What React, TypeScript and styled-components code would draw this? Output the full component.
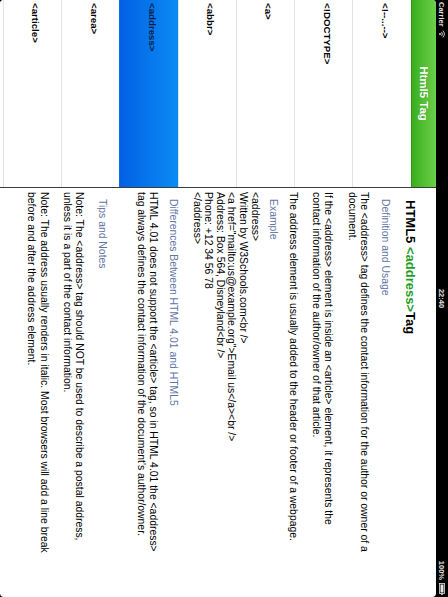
import React from 'react';
import styled, { createGlobalStyle } from 'styled-components';

const GlobalStyle = createGlobalStyle`
  *, *::before, *::after { box-sizing: border-box; }
  html, body { margin: 0; padding: 0; background: #000; }
  body { font-family: "Liberation Sans", Arial, sans-serif; }
  #root { width: 448px; height: 597px; overflow: hidden; }
`;

const Device = styled.div`
  width: 448px;
  height: 597px;
  overflow: hidden;
  background: #000;
`;

// the whole landscape screen is shown turned a quarter clockwise
const Screen = styled.div`
  width: 597px;
  height: 448px;
  display: flex;
  flex-direction: column;
  background: #000;
  transform-origin: 0 0;
  transform: translateX(448px) rotate(90deg);
`;

const StatusBar = styled.div`
  height: 12px;
  flex: none;
  display: grid;
  grid-template-columns: 1fr auto 1fr;
  align-items: center;
  padding: 0 2px;
  color: #e4e4e4;
  font: bold 7.5px "Liberation Sans", Arial, sans-serif;
`;

const StatusGroup = styled.div<{ $end?: boolean }>`
  display: flex;
  align-items: center;
  gap: 3px;
  justify-content: ${(p) => (p.$end ? 'flex-end' : 'flex-start')};
`;

const Split = styled.div`
  flex: 1;
  min-height: 0;
  display: flex;
  border-radius: 4px;
  overflow: hidden;
  background: #fff;
`;

const Master = styled.div`
  width: 188px;
  flex: none;
  display: flex;
  flex-direction: column;
  border-right: 1px solid #3c3c3c;
  overflow: hidden;
`;

const NavBar = styled.div`
  height: 25.3px;
  flex: none;
  display: flex;
  align-items: center;
  justify-content: center;
  background: linear-gradient(#6ccf4a, #3aae1d);
  border-bottom: 1px solid #2f9418;
  color: #fff;
  font: bold 11.5px "Liberation Sans", Arial, sans-serif;
  text-shadow: 0 -1px 0 rgba(0, 0, 0, 0.2);
`;

const Row = styled.div<{ $selected?: boolean }>`
  height: 58.3px;
  flex: none;
  display: flex;
  align-items: center;
  padding: 0 0 7px 3px;
  border-bottom: 1px solid ${(p) => (p.$selected ? '#0a6fe6' : '#e3e3e3')};
  background: ${(p) => (p.$selected ? 'linear-gradient(#0b8cf5, #0260e3)' : '#fff')};
  color: ${(p) => (p.$selected ? '#0c1d45' : '#000')};
  font: bold 9.7px "Liberation Sans", Arial, sans-serif;
`;

const Detail = styled.div`
  flex: 1;
  min-width: 0;
  display: flex;
  flex-direction: column;
  padding: 0 4px;
  overflow: hidden;
  color: #000;
  font: 10.4px "Liberation Sans", Arial, sans-serif;
  line-height: 12.3px;
`;

const Title = styled.h1<{ $top: number }>`
  margin: ${(p) => p.$top}px 0 0;
  padding-left: 8px;
  font: bold 13px "Liberation Sans", Arial, sans-serif;
  line-height: 18px;
`;

const Accent = styled.span`
  color: #1f9e1f;
`;

const Heading = styled.h3<{ $top: number }>`
  margin: ${(p) => p.$top}px 0 0;
  padding-left: 7px;
  color: #5e76a5;
  font: 10.4px "Liberation Sans", Arial, sans-serif;
  line-height: 12px;
`;

const Para = styled.p<{ $top: number; $tight?: boolean }>`
  margin: ${(p) => p.$top}px 0 0;
  white-space: nowrap;
  line-height: ${(p) => (p.$tight ? '11.6px' : '12.3px')};
`;

const Wifi = () => (
  <svg width="8" height="6" viewBox="0 0 8 6">
    <path d="M0.6 2.2 A5 5 0 0 1 7.4 2.2" stroke="#e4e4e4" strokeWidth="0.9" fill="none" />
    <path d="M1.9 3.5 A3.2 3.2 0 0 1 6.1 3.5" stroke="#e4e4e4" strokeWidth="0.9" fill="none" />
    <circle cx="4" cy="5" r="0.9" fill="#e4e4e4" />
  </svg>
);

const Battery = () => (
  <svg width="12" height="6" viewBox="0 0 12 6">
    <rect x="0.5" y="0.5" width="10" height="5" fill="none" stroke="#e4e4e4" strokeWidth="0.8" />
    <rect x="1.5" y="1.5" width="8" height="3" fill="#e4e4e4" />
    <rect x="10.8" y="2" width="1" height="2" fill="#e4e4e4" />
  </svg>
);

const tags = ['<!--...-->', '<!DOCTYPE>', '<a>', '<abbr>', '<address>', '<area>', '<article>'];

export default function App() {
  return (
    <Device>
      <GlobalStyle />
      <Screen>
        <StatusBar>
          <StatusGroup>
            <span>Carrier</span>
            <Wifi />
          </StatusGroup>
          <span>22:40</span>
          <StatusGroup $end>
            <span>100%</span>
            <Battery />
          </StatusGroup>
        </StatusBar>
        <Split>
          <Master>
            <NavBar>Html5 Tag</NavBar>
            {tags.map((t) => (
              <Row key={t} $selected={t === '<address>'}>
                {t}
              </Row>
            ))}
            <Row />
          </Master>
          <Detail>
            <Title $top={17}>
              HTML5 <Accent>&lt;address&gt;</Accent>Tag
            </Title>
            <Heading $top={10}>Definition and Usage</Heading>
            <Para $top={9}>
              The &lt;address&gt; tag defines the contact information for the author or owner of a
              <br />
              document.
            </Para>
            <Para $top={11}>
              If the &lt;address&gt; element is inside an &lt;article&gt; element, it represents the
              <br />
              contact information of the author/owner of that article.
            </Para>
            <Para $top={11}>The address element is usually added to the header or footer of a webpage.</Para>
            <Heading $top={8}>Example</Heading>
            <Para $top={6} $tight>
              &lt;address&gt;
              <br />
              Written by W3Schools.com&lt;br /&gt;
              <br />
              &lt;a href="mailto:us@example.org"&gt;Email us&lt;/a&gt;&lt;br /&gt;
              <br />
              Address: Box 564, Disneyland&lt;br /&gt;
              <br />
              Phone: +12 34 56 78
              <br />
              &lt;/address&gt;
            </Para>
            <Heading $top={12}>Differences Between HTML 4.01 and HTML5</Heading>
            <Para $top={8}>
              HTML 4.01 does not support the &lt;article&gt; tag, so in HTML 4.01 the &lt;address&gt;
              <br />
              tag always defines the contact information of the document's author/owner.
            </Para>
            <Heading $top={26}>Tips and Notes</Heading>
            <Para $top={11}>
              Note: The &lt;address&gt; tag should NOT be used to describe a postal address,
              <br />
              unless it is a part of the contact information.
            </Para>
            <Para $top={11}>
              Note: The address usually renders in italic. Most browsers will add a line break
              <br />
              before and after the address element.
            </Para>
          </Detail>
        </Split>
      </Screen>
    </Device>
  );
}
